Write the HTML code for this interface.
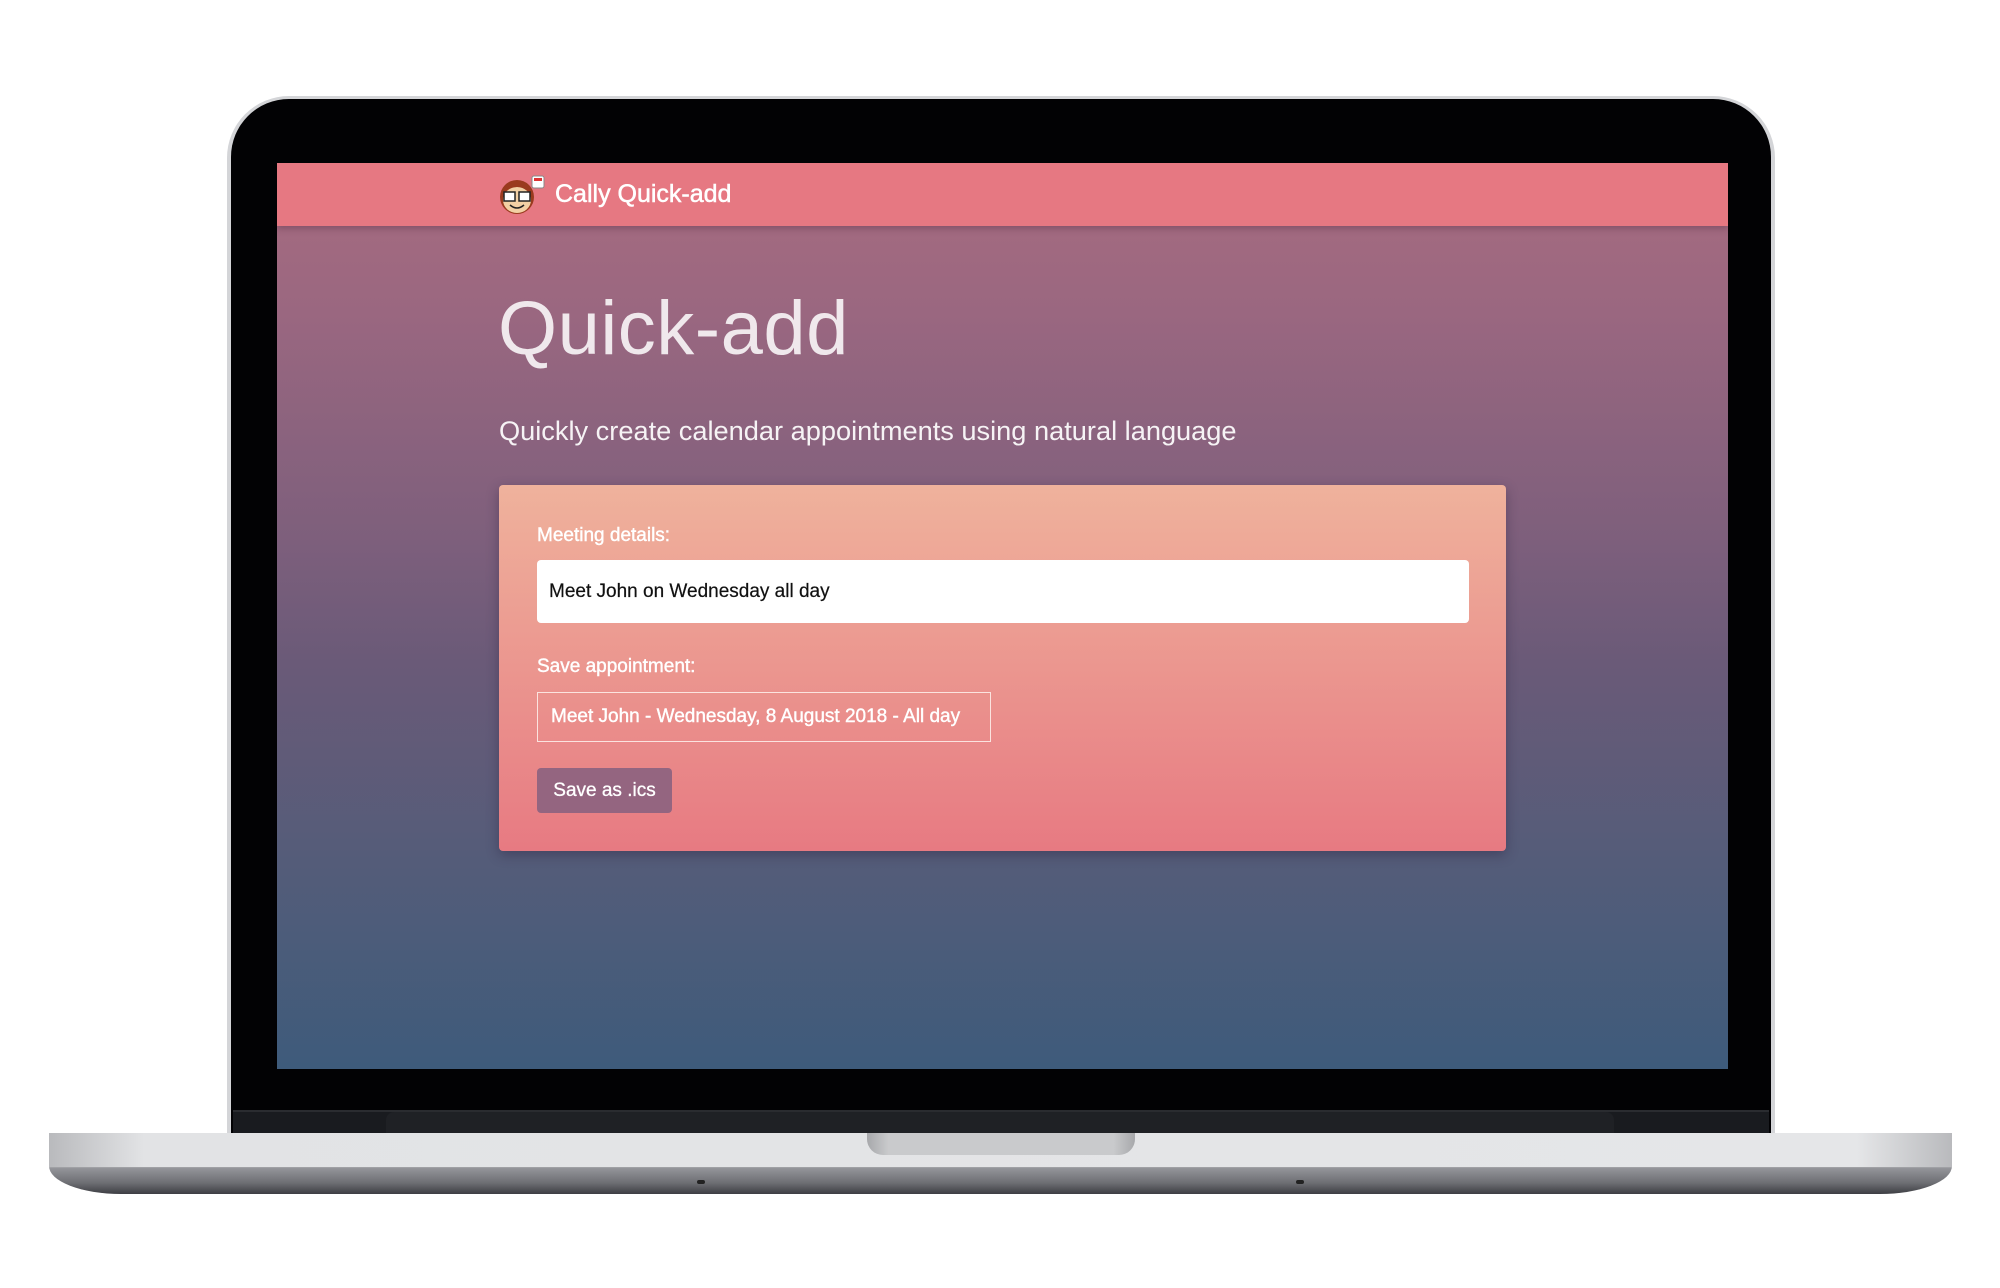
<!DOCTYPE html>
<html><head><meta charset="utf-8"><style>
*{margin:0;padding:0;box-sizing:border-box}
html,body{width:2000px;height:1288px;background:#fff;overflow:hidden;font-family:"Liberation Sans",sans-serif}
.lid{position:absolute;left:227px;top:96px;width:1548px;height:1050px;border-radius:62px 62px 0 0;background:#d4d5d8;}
.lid2{position:absolute;left:231px;top:99px;width:1540px;height:1047px;border-radius:58px 58px 0 0;background:#020204;}
.chin{position:absolute;left:233px;top:1110px;width:1536px;height:30px;background:#191b1f;border-top:2px solid #2a2c30}
.hinge{position:absolute;left:386px;top:1112px;width:1228px;height:24px;background:#1f2125;border-radius:8px 8px 0 0}
.screen{position:absolute;left:277px;top:163px;width:1451px;height:906px;background:linear-gradient(#a86c80 0px,#9a6780 150px,#7d5f7c 380px,#6a5a78 500px,#545c79 700px,#3e5b7b 906px);overflow:hidden}
.hdr{position:absolute;left:0;top:0;width:100%;height:63px;background:#e67882;box-shadow:0 3px 6px rgba(80,40,60,.35)}
.title{position:absolute;left:278px;top:14px;color:#fff;font-size:25px;line-height:34px;-webkit-text-stroke:.5px #fff}
.logo{position:absolute;left:221px;top:12px}
h1{position:absolute;left:221px;top:116px;font-weight:300;font-size:76px;color:rgba(255,255,255,.85);line-height:100px;letter-spacing:.5px}
.sub{position:absolute;left:222px;top:250px;font-size:27.2px;color:rgba(255,255,255,.92);font-weight:300;line-height:36px;letter-spacing:0}
.card{position:absolute;left:222px;top:322px;width:1007px;height:366px;border-radius:4px;background:linear-gradient(#efb29c,#e77a82);box-shadow:0 4px 12px rgba(40,30,60,.4)}
.lbl{position:absolute;left:38px;color:#fff;font-size:19px;-webkit-text-stroke:.4px #fff}
.inp{position:absolute;left:38px;top:75px;width:932px;height:63px;background:#fff;border-radius:4px;font-size:19px;color:#111;padding-left:12px;line-height:63px;-webkit-text-stroke:.2px #111}
.box{position:absolute;left:38px;top:207px;width:454px;height:50px;border:1.5px solid #fbe3df;color:#fff;font-size:19px;line-height:47px;padding-left:13px;-webkit-text-stroke:.4px #fff}
.btn{position:absolute;left:38px;top:283px;width:135px;height:45px;background:#946580;border-radius:4px;color:#fff;font-size:19px;line-height:45px;text-align:center;-webkit-text-stroke:.3px #fff}
.base{position:absolute;left:49px;top:1133px;width:1903px;height:61px;border-radius:0 0 72px 72px / 0 0 28px 28px;background:linear-gradient(#c8c9cc 0,#e3e4e6 3px,#e6e7e9 30px,#d9dadd 32px,#94959a 35px,#6d6e73 50px,#3d3e43 61px);overflow:hidden}
.base:before{content:"";position:absolute;left:0;top:0;width:100%;height:34px;background:linear-gradient(90deg,#b9babd,#e2e3e5 5%,#e5e6e8 95%,#b9babd)}
.notch{position:absolute;left:818px;top:0;width:268px;height:22px;border-radius:0 0 16px 16px;background:linear-gradient(90deg,#a7a8ab,#c9cacc 8%,#c9cacc 92%,#a7a8ab)}
.dot{position:absolute;top:47px;width:8px;height:4px;border-radius:3px;background:#222}
</style></head><body>
<div class="lid"></div><div class="lid2"></div>
<div class="chin"></div><div class="hinge"></div>
<div class="screen">
 <div class="hdr">
  <svg class="logo" width="48" height="40" viewBox="0 0 48 40">
   <ellipse cx="19" cy="22" rx="17" ry="17" fill="#9a3a1e"/>
   <ellipse cx="19" cy="25" rx="14" ry="13" fill="#f2d0a4"/>
   <path d="M4 18 Q8 6 19 6 Q30 6 34 18 L30 14 Q19 10 8 14 Z" fill="#9a3a1e"/>
   <rect x="6" y="17" width="11" height="9" fill="#fff" stroke="#222" stroke-width="1.5"/>
   <rect x="21" y="17" width="11" height="9" fill="#fff" stroke="#222" stroke-width="1.5"/>
   <path d="M12 30 Q19 36 26 30" stroke="#222" stroke-width="1.5" fill="none"/>
   <rect x="34" y="1" width="12" height="12" rx="2" fill="#fff" stroke="#888"/>
   <rect x="36" y="3" width="8" height="3" fill="#d33"/>
  </svg>
  <div class="title">Cally Quick-add</div>
 </div>
 <h1>Quick-add</h1>
 <div class="sub">Quickly create calendar appointments using natural language</div>
 <div class="card">
  <div class="lbl" style="top:40px">Meeting details:</div>
  <div class="inp">Meet John on Wednesday all day</div>
  <div class="lbl" style="top:171px">Save appointment:</div>
  <div class="box">Meet John - Wednesday, 8 August 2018 - All day</div>
  <div class="btn">Save as .ics</div>
 </div>
</div>
<div class="base"><div class="notch"></div><div class="dot" style="left:648px"></div><div class="dot" style="left:1247px"></div></div>
</body></html>
